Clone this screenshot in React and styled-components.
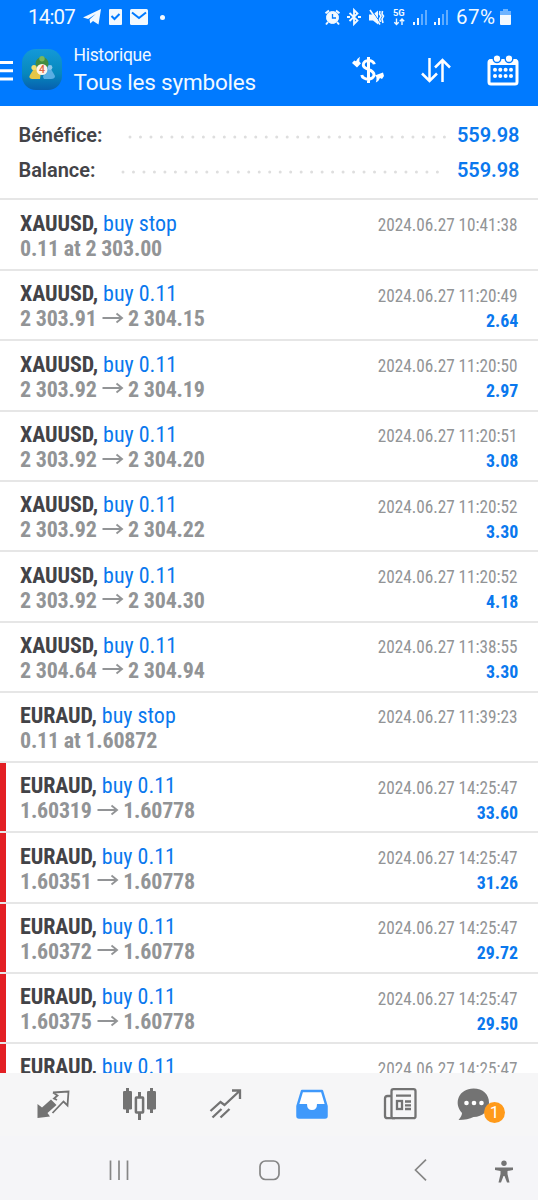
import React from 'react'
import styled, { createGlobalStyle } from 'styled-components'

const GlobalStyle = createGlobalStyle`
  * {
    box-sizing: border-box;
  }

  body {
    margin: 0;
    background: #fff;
    font-family: Roboto, sans-serif;
  }
`

const Screen = styled.div`
  display: flex;
  flex-direction: column;
  width: 538px;
  height: 1200px;
  overflow: hidden;
`

const Header = styled.header`
  flex: none;
  height: 106px;
  background: #007aff;
  color: #f2f9ff;
`

const StatusBar = styled.div`
  display: flex;
  justify-content: space-between;
  align-items: center;
  height: 34px;
  padding: 0 27px 0 28px;
`

const StatusGroup = styled.div`
  display: flex;
  align-items: center;
  height: 100%;
`

const StatusText = styled.span`
  font-size: 20.5px;
  line-height: 33px;
  letter-spacing: ${p => p.$spacing || 0}px;
  width: ${p => p.$width}px;
  padding-left: ${p => p.$left || 0}px;
  white-space: nowrap;
`

const Icon = styled.svg`
  display: block;
  flex: none;
  overflow: visible;
  margin-left: ${p => p.$left || 0}px;
`

const TitleBar = styled.div`
  display: flex;
  height: 72px;
`

const LogoBox = styled.div`
  padding-top: 15px;
`

const Titles = styled.div`
  width: 286px;
  padding: 11px 0 0 10.5px;
`

const Caption = styled.div`
  font-size: 17.5px;
  line-height: 21px;
  letter-spacing: -0.3px;
`

const Title = styled.div`
  margin-top: 3px;
  font-size: 22.5px;
  line-height: 27px;
  letter-spacing: -0.2px;
  white-space: nowrap;
`

const Summary = styled.section`
  flex: none;
  height: 94px;
  padding: 11px 18.5px 0 18.5px;
  border-bottom: 2px solid #e6e6e6;
`

const SummaryRow = styled.div`
  display: flex;
  align-items: center;
  height: 35px;
  padding-top: 1px;
  font-size: 20px;
`

const SummaryLabel = styled.span`
  width: ${p => p.$width}px;
  color: #434347;
  font-weight: 600;
  letter-spacing: -0.05px;
  white-space: nowrap;
`

const SummaryValue = styled.span`
  margin-left: auto;
  color: #0a78ee;
  font-weight: 600;
  letter-spacing: -0.05px;
`

const Deals = styled.main`
  flex: 1;
  min-height: 0;
  overflow: hidden;
`

const Deal = styled.div`
  display: flex;
  justify-content: space-between;
  height: ${p => p.$first ? 71.2 : 70.27}px;
  padding: ${p => p.$first ? 11 : 10.3}px 20px 0 20px;
  box-shadow: inset 0 -2px #e6e6e6, inset 6px 0 ${p => p.$marked ? '#e31f24' : '#fff'};
  font-family: 'Roboto Condensed', Roboto, sans-serif;
  font-stretch: condensed;
`

const Line = styled.div`
  display: flex;
  align-items: center;
  height: 25px;
  font-size: 22px;
  letter-spacing: -0.2px;
  white-space: pre;
`

const Symbol = styled.span`
  color: #434347;
  font-weight: 700;
  letter-spacing: -0.1px;
`

const Side = styled.span`
  color: #0a78ee;
  letter-spacing: 0;
`

const Price = styled.span`
  color: #929496;
  font-weight: 700;
`

const Result = styled.div`
  display: flex;
  flex-direction: column;
  align-items: flex-end;
  padding-top: 1.4px;
  font-size: 19px;
  line-height: 25px;
`

const Time = styled.span`
  color: #929496;
  transform: scaleX(0.905);
  transform-origin: right;
`

const Profit = styled.span`
  color: #0a78ee;
  font-weight: 700;
  transform: scaleX(0.94);
  transform-origin: right;
`

const TabBar = styled.nav`
  display: flex;
  flex: none;
  height: 63px;
  background: #f6f6f7;
`

const Tab = styled.div`
  position: relative;
  display: flex;
  justify-content: center;
  width: ${p => p.$width}px;
  padding-top: 14px;
`

const Badge = styled.span`
  position: absolute;
  top: 29px;
  left: 31px;
  width: 21px;
  height: 21px;
  border-radius: 50%;
  background: #ff9a1a;
  color: #fff;
  font-size: 17px;
  line-height: 21px;
  text-align: center;
`

const SystemBar = styled.footer`
  display: flex;
  flex: none;
  height: 64px;
  padding-top: 23px;
  background: #f5f5f8;
`

const deals = [
  ['XAUUSD', 'buy stop', '0.11 at 2 303.00', null, '10:41:38'],
  ['XAUUSD', 'buy 0.11', '2 303.91', '2 304.15', '11:20:49', '2.64'],
  ['XAUUSD', 'buy 0.11', '2 303.92', '2 304.19', '11:20:50', '2.97'],
  ['XAUUSD', 'buy 0.11', '2 303.92', '2 304.20', '11:20:51', '3.08'],
  ['XAUUSD', 'buy 0.11', '2 303.92', '2 304.22', '11:20:52', '3.30'],
  ['XAUUSD', 'buy 0.11', '2 303.92', '2 304.30', '11:20:52', '4.18'],
  ['XAUUSD', 'buy 0.11', '2 304.64', '2 304.94', '11:38:55', '3.30'],
  ['EURAUD', 'buy stop', '0.11 at 1.60872', null, '11:39:23'],
  ['EURAUD', 'buy 0.11', '1.60319', '1.60778', '14:25:47', '33.60'],
  ['EURAUD', 'buy 0.11', '1.60351', '1.60778', '14:25:47', '31.26'],
  ['EURAUD', 'buy 0.11', '1.60372', '1.60778', '14:25:47', '29.72'],
  ['EURAUD', 'buy 0.11', '1.60375', '1.60778', '14:25:47', '29.50'],
  ['EURAUD', 'buy 0.11', '1.60378', '1.60778', '14:25:47', '29.30']
]

const Arrow = () => <Icon width="31.5" height="14" viewBox="0 0 31.5 14" fill="none" stroke="#929496" strokeWidth="1.9">
  <path d="M5.5 6H25M19.5 1.5L25 6L19.5 10.5"/>
</Icon>

const Signal = ({ left }) => <Icon $left={left} width="15" height="15" viewBox="0 0 15 15" fill="#f2f9ff">
  <path d="M0 12h2v3H0zM4 8h2v7H4z"/>
  <path opacity=".4" d="M8 4h2v11H8zM12 0h2v15h-2z"/>
</Icon>

const AppLogo = () => <Icon $left={8} width="41" height="41" viewBox="0 0 41 41">
  <defs>
    <linearGradient id="sea" x1="0" y1="0" x2="0" y2="1">
      <stop offset="0" stopColor="#1399d8"/>
      <stop offset=".6" stopColor="#0788bd"/>
      <stop offset="1" stopColor="#075fae"/>
    </linearGradient>
  </defs>
  <rect width="40" height="41" rx="14" fill="url(#sea)"/>
  <circle cx="20" cy="14.5" r="6.5" fill="#438c42"/>
  <circle cx="20" cy="9.8" r="2.7" fill="#79b75b"/>
  <path d="M8 26L13 18L19 22L18 30H10Q6 29 8 26Z" fill="#e5c647"/>
  <circle cx="12" cy="18.5" r="2.6" fill="#f3dd70"/>
  <path d="M21 28L24 19L29 20L33 27Q33 30 29 30H22Z" fill="#5aaee3"/>
  <circle cx="28" cy="18.5" r="2.4" fill="#8dc6e9"/>
  <circle cx="20" cy="20.5" r="5.5" fill="#fff4e9"/>
  <text x="20" y="24.3" textAnchor="middle" fontFamily="Roboto" fontSize="10.5" fontWeight="500" fill="#df6342">4</text>
</Icon>

const StatusIcons = () => <>
  <Icon width="18" height="16" viewBox="0 0 18 16" fill="#f2f9ff">
    <path d="M0 8.5L18 0L15.5 15.5L10 12L7.3 14.5L6.5 10.4L13 4.8L5.2 10Z"/>
  </Icon>
  <Icon $left={8} width="13" height="16" viewBox="0 0 13 16">
    <rect width="13" height="16" rx="1" fill="#f2f9ff"/>
    <path d="M2.5 7L5.5 10L10.5 5" fill="none" stroke="#007aff" strokeWidth="2"/>
  </Icon>
  <Icon $left={8} width="18" height="16" viewBox="0 0 18 16">
    <rect width="18" height="16" rx="1.5" fill="#f2f9ff"/>
    <path d="M2 3.5L9 9L16 3.5" fill="none" stroke="#007aff" strokeWidth="2"/>
  </Icon>
  <Icon $left={11.5} width="5" height="5" viewBox="0 0 5 5"><circle cx="2.5" cy="2.5" r="2.5" fill="#f2f9ff"/></Icon>
</>

const DeviceIcons = () => <>
  <Icon width="15" height="15" viewBox="0 0 15 15" fill="none" stroke="#f2f9ff">
    <circle cx="7.5" cy="7.5" r="6" fill="#f2f9ff"/>
    <path d="M.5 3.2L4 .6M14.5 3.2L11 .6M3 12L1 14.5M12 12L14 14.5" strokeWidth="2"/>
    <path d="M7.5 4V8H11" stroke="#007aff" strokeWidth="1.3"/>
  </Icon>
  <Icon $left={7} width="14" height="16" viewBox="0 0 14 16" fill="none" stroke="#f2f9ff" strokeWidth="1.8">
    <path d="M2.5 4L10.5 11.5L7 15V1L10.5 4.5L2.5 12"/>
    <path d="M0 8H3M11 8H14"/>
  </Icon>
  <Icon $left={8} width="15" height="15" viewBox="0 0 15 15" fill="none" stroke="#f2f9ff" strokeWidth="1.6">
    <path d="M0 4.5H4L9 .5V14.5L4 10.5H0Z" fill="#f2f9ff" stroke="none"/>
    <path d="M2.8 .5L12.3 14" stroke="#007aff" strokeWidth="1"/>
    <path d="M1 0L11 14.5"/>
    <path d="M11 1L10.5 4L12 6L10.5 9L11.5 12M13.5 1L13 4L14.5 6L13 9L14 13"/>
  </Icon>
  <Icon $left={9} width="14" height="17" viewBox="0 0 14 17" fill="none" stroke="#f2f9ff" strokeWidth="1.4">
    <text x="0" y="7.3" fontFamily="Roboto" fontSize="9.3" fontWeight="700" fill="#f2f9ff" stroke="none">5G</text>
    <path d="M3.5 9.5V15.5M1.3 13.3L3.5 15.5L5.7 13.3M9 16V10M6.8 12.2L9 10L11.2 12.2"/>
  </Icon>
  <Signal left={6}/>
  <Signal left={6}/>
</>

const HeaderIcons = () => <>
  <Icon $left={3} width="32" height="28" viewBox="0 0 32 28" fill="none" stroke="#fff" strokeWidth="3">
    <path d="M22.3 8.3C21.5 3.2 11.3 3 11.3 9C11.3 14.3 22 12.5 22 18.8C22 24.8 10.5 24.3 9.8 19M16.5 1V27"/>
    <path d="M0 7L2.2 4.5L4 5.2Q5.2 2.5 8 .8Q7 3.5 7.4 5.8L9 7.2L5 11.5ZM32 20L30 23L28 22Q27 25 23.8 26.6Q24.8 23.5 24.4 21L22.8 19.4L31 16.5Z" fill="#fff" stroke="none"/>
  </Icon>
  <Icon $left={37} width="30" height="25" viewBox="0 0 30 25" fill="none" stroke="#fff" strokeWidth="2.5">
    <path d="M8.5 0V23M1 15.5L8.5 23L16 15.5M21.5 24V1.5M14 9.5L21.5 2L29 9.5"/>
  </Icon>
  <Icon $left={36} width="32" height="31" viewBox="0 0 32 31">
    <rect x="2" y="5.5" width="28" height="23.5" rx="2" fill="none" stroke="#fff" strokeWidth="3"/>
    <path d="M2 4.5H30V10H2Z" fill="#fff"/>
    {[10, 22].map(x => <circle key={x} cx={x} cy="3.7" r="3.8" fill="#fff" stroke="#007aff" strokeWidth="1.4"/>)}
    {[14.8, 21].map(y => [8, 13.3, 18.6, 24].map(x => <circle key={x + y} cx={x} cy={y} r="2" fill="#fff"/>))}
  </Icon>
</>

const Dots = ({ left }) => <Icon $left={left} width="320" height="5" viewBox="0 0 320 5">
  <path d="M2 4H317" stroke="#dedede" strokeWidth="3" strokeLinecap="round" strokeDasharray="0 10.48"/>
</Icon>

const DealRow = ({ deal, first }) => {
  const [symbol, side, open, close, time, profit] = deal

  return <Deal $first={first} $marked={symbol === 'EURAUD' && profit}>
    <div>
      <Line><Symbol>{symbol}, </Symbol><Side>{side}</Side></Line>
      <Line>
        <Price>{open}</Price>
        {close && <Arrow/>}
        {close && <Price>{close}</Price>}
      </Line>
    </div>
    <Result>
      <Time>2024.06.27 {time}</Time>
      {profit && <Profit>{profit}</Profit>}
    </Result>
  </Deal>
}

const Tabs = () => <TabBar>
  <Tab $width={106}>
    <Icon width="34" height="34" viewBox="0 0 34 34" fill="none" stroke="#737373" strokeWidth="1.8">
      <path d="M1.5 17L6 20.5L15 12.5L20.5 18L11.5 26L14 29.5L1.5 31Z" fill="#737373" stroke="none"/>
      <path d="M17 5.5L32.5 4.5L31.5 18.5L27.5 14.5L16.5 26M17 5.5L21.5 8.5L18 11.5L21 13"/>
    </Icon>
  </Tab>
  <Tab $width={68}>
    <Icon width="34" height="34" viewBox="0 0 34 34" fill="#737373">
      <rect x="0" y="4" width="9" height="18.5" rx="1.3"/>
      <rect x="24" y="4" width="9" height="18.5" rx="1.3"/>
      <path d="M3 1h3v25H3zM27 1h3v25h-3zM15 5h3v28h-3z"/>
      <rect x="12.9" y="10.5" width="7.2" height="15" rx=".5" fill="#f6f6f7" stroke="#737373" strokeWidth="2.5"/>
    </Icon>
  </Tab>
  <Tab $width={104}>
    <Icon width="32" height="32" viewBox="0 0 32 32" fill="none" stroke="#737373" strokeWidth="2.3">
      <path d="M.5 24L10.5 15L14.5 18L29.5 4M22 3.5H30V12M2.5 30.5L11.5 22M10.5 30.5L19.5 22"/>
    </Icon>
  </Tab>
  <Tab $width={68}>
    <Icon width="32" height="32" viewBox="0 0 32 32">
      <path d="M6 4H26L30.5 19V29Q30.5 30.5 29 30.5H3Q1.5 30.5 1.5 29V19Z" fill="#fff" stroke="#3f99fb" strokeWidth="2.5" strokeLinejoin="round"/>
      <path d="M1 17H11Q11 23 16 23T21 17H31V29Q31 31 29 31H3Q1 31 1 29Z" fill="#3f99fb"/>
    </Icon>
  </Tab>
  <Tab $width={107}>
    <Icon width="34" height="34" viewBox="0 0 34 34" fill="none" stroke="#737373" strokeWidth="2.3">
      <rect x="8.5" y="2.2" width="24" height="29" rx="2"/>
      <path d="M8 9H4.5Q2 9 2 11.5V29Q2 31.2 4.5 31.2H12M13 8.7H28M22 14.5H28M22 18.3H28M22 22H28"/>
      <rect x="14" y="14" width="5" height="8"/>
    </Icon>
  </Tab>
  <Tab $width={85}>
    <Icon $left={-44} width="34" height="34" viewBox="0 0 34 34" fill="#737373">
      <path d="M16.5 1.5C26 1.5 32 7.5 32 15.5S26 30 16.5 30Q11 33 1.5 33Q5 29 5 26C-4 16 2 1.5 16.5 1.5Z"/>
      {[9.5, 17, 24.5].map(x => <circle key={x} cx={x} cy="16" r="2.3" fill="#fff"/>)}
    </Icon>
    <Badge>1</Badge>
  </Tab>
</TabBar>

export default function App() {
  return <Screen>
    <GlobalStyle/>
    <Header>
      <StatusBar>
        <StatusGroup>
          <StatusText $width={55} $spacing={-0.8}>14:07</StatusText>
          <StatusIcons/>
        </StatusGroup>
        <StatusGroup>
          <DeviceIcons/>
          <StatusText $width={51} $left={7} $spacing={0.5}>67%</StatusText>
          <Icon width="11" height="16" viewBox="0 0 11 16" fill="#f2f9ff">
            <path opacity=".45" d="M3 0H8V2H11V6H0V2H3Z"/>
            <path d="M0 6H11V15Q11 16 10 16H1Q0 16 0 15Z"/>
          </Icon>
        </StatusGroup>
      </StatusBar>
      <TitleBar>
        <Icon width="14" height="72" viewBox="0 0 14 72" stroke="#fff" strokeWidth="3">
          <path d="M0 28.5H13M0 36.7H13M0 45H13"/>
        </Icon>
        <LogoBox><AppLogo/></LogoBox>
        <Titles>
          <Caption>Historique</Caption>
          <Title>Tous les symboles</Title>
        </Titles>
        <StatusGroup><HeaderIcons/></StatusGroup>
      </TitleBar>
    </Header>
    <Summary>
      <SummaryRow>
        <SummaryLabel $width={85}>Bénéfice:</SummaryLabel>
        <Dots left={24}/>
        <SummaryValue>559.98</SummaryValue>
      </SummaryRow>
      <SummaryRow>
        <SummaryLabel $width={78}>Balance:</SummaryLabel>
        <Dots left={24}/>
        <SummaryValue>559.98</SummaryValue>
      </SummaryRow>
    </Summary>
    <Deals>
      {deals.map((deal, i) => <DealRow key={i} deal={deal} first={i === 0}/>)}
    </Deals>
    <Tabs/>
    <SystemBar>
      <Icon $left={109} width="20" height="22" viewBox="0 0 20 22" stroke="#868686" strokeWidth="1.7">
        <path d="M1.5 1.5V21M10 1.5V21M18.5 1.5V21"/>
      </Icon>
      <Icon $left={130} width="21" height="22" viewBox="0 0 21 22" fill="none" stroke="#868686" strokeWidth="1.7">
        <rect x="1" y="2" width="19" height="18.5" rx="5.5"/>
      </Icon>
      <Icon $left={134} width="13" height="22" viewBox="0 0 13 22" fill="none" stroke="#868686" strokeWidth="1.7">
        <path d="M12 .7L1.5 11L12 21.3"/>
      </Icon>
      <Icon $left={68} width="18" height="26" viewBox="0 0 18 26" fill="#737373">
        <circle cx="9" cy="4.2" r="2.7"/>
        <path d="M0 8.6H18V11L12.5 12V15L14.5 23.5H12L9.5 17H8.5L6 23.5H3.5L5.5 15V12L0 11Z"/>
      </Icon>
    </SystemBar>
  </Screen>
}
